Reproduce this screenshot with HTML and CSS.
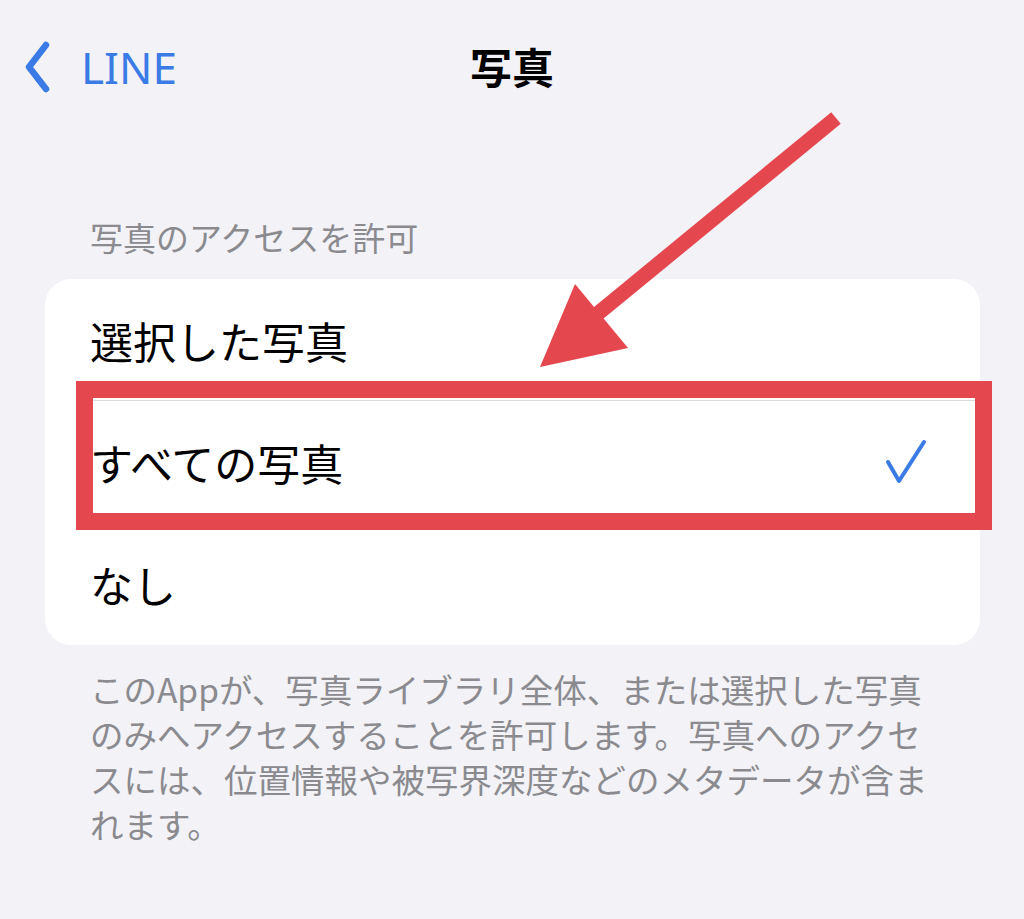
FILE: index.html
```html
<!DOCTYPE html>
<html lang="ja">
<head>
  <meta charset="UTF-8" />
  <meta name="viewport" content="width=device-width, initial-scale=1.0" />
  <title>写真</title>
  <link rel="stylesheet" href="styles.css">
</head>
<body>
  <header class="nav">
    <a class="back" href="#">
      <svg class="chevron" width="30" height="52" viewBox="0 0 30 52">
        <path d="M22 4 L5 26 L22 48" fill="none" stroke="currentColor" stroke-width="6.5" stroke-linecap="round" stroke-linejoin="round"/>
      </svg>
      <span>LINE</span>
    </a>
    <h1 class="title">写真</h1>
    <div></div>
  </header>

  <div class="section-label">写真のアクセスを許可</div>

  <ul class="card">
    <li class="row">選択した写真</li>
    <li class="row">すべての写真
      <svg class="check" width="44" height="46" viewBox="0 0 44 46">
        <path d="M5 23 L16 42 L41 3" fill="none" stroke="currentColor" stroke-width="4" stroke-linecap="round" stroke-linejoin="round"/>
      </svg>
    </li>
    <li class="row">なし</li>
  </ul>

  <p class="note">
    このAppが、写真ライブラリ全体、または選択した写真<br>
    のみへアクセスすることを許可します。写真へのアクセ<br>
    スには、位置情報や被写界深度などのメタデータが含ま<br>
    れます。
  </p>

  <!-- annotation drawn over the screenshot -->
  <div class="highlight"></div>
  <svg class="arrow" width="1024" height="919" viewBox="0 0 1024 919">
    <line x1="836" y1="118" x2="590" y2="320" stroke="#e5474f" stroke-width="15" />
    <polygon points="575,284 628,348 540,367" fill="#e5474f" />
  </svg>
</body>
</html>
```

FILE: styles.css
```css
html, body {
  margin: 0;
  padding: 0;
}
body {
  position: relative;
  width: 1024px;
  height: 919px;
  overflow: hidden;
  background: #f2f2f7;
  font-family: "Noto Sans CJK JP", "Noto Sans", sans-serif;
  color: #000;
}
.nav {
  display: grid;
  grid-template-columns: 1fr auto 1fr;
  align-items: center;
  height: 134px;
}
.back {
  display: flex;
  align-items: center;
  gap: 27px;
  padding-left: 24px;
  color: #3a7be6;
  text-decoration: none;
  font-family: "Noto Sans", "Open Sans", sans-serif;
  font-size: 44px;
  line-height: 1;
  margin-top: 0;
}
.chevron {
  display: block;
}
.title {
  margin: 0;
  font-size: 42px;
  font-weight: 700;
  line-height: 1;
  margin-top: -2px;
}
.section-label {
  margin: 83px 0 0 90px;
  font-size: 33px;
  line-height: 40px;
  color: #8a8a8f;
}
.card {
  list-style: none;
  margin: 22px 44px 0 45px;
  padding: 0 0 0 45px;
  background: #fff;
  border-radius: 26px;
}
.row {
  display: flex;
  align-items: center;
  justify-content: space-between;
  height: 122px;
  padding-right: 53px;
  font-size: 43px;
  border-bottom: 1px solid #dcdce0;
  box-sizing: border-box;
}
.row:last-child {
  border-bottom: none;
}
.check {
  color: #3a7be6;
}
.note {
  margin: 21px 0 0 90px;
  font-size: 33.5px;
  line-height: 45px;
  color: #8a8a8f;
  white-space: nowrap;
}
.highlight {
  position: absolute;
  left: 76px;
  top: 381px;
  width: 916px;
  height: 149px;
  border: 17px solid #e5474f;
  box-sizing: border-box;
}
.arrow {
  position: absolute;
  left: 0;
  top: 0;
  pointer-events: none;
}
```
